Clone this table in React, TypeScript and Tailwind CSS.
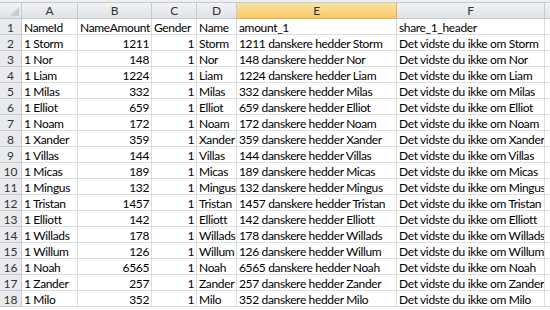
const names = [
  ["Storm", 1211],
  ["Nor", 148],
  ["Liam", 1224],
  ["Milas", 332],
  ["Elliot", 659],
  ["Noam", 172],
  ["Xander", 359],
  ["Villas", 144],
  ["Micas", 189],
  ["Mingus", 132],
  ["Tristan", 1457],
  ["Elliott", 142],
  ["Willads", 178],
  ["Willum", 126],
  ["Noah", 6565],
  ["Zander", 257],
  ["Milo", 352],
] as const;

const cols = [
  { key: "A", w: "w-[56px]" },
  { key: "B", w: "w-[74px]" },
  { key: "C", w: "w-[45px]" },
  { key: "D", w: "w-[40px]" },
  { key: "E", w: "w-[160px]" },
  { key: "F", w: "w-[148px]" },
];

const cell =
  "h-[16px] shrink-0 border-r border-b border-[#dadcdd] px-[2px] pt-[1px] leading-[15px] whitespace-nowrap overflow-hidden";

const Row = ({ n, values }: { n: number; values: (string | number)[] }) => {
  return (
    <div className="flex">
      <div className="h-[16px] w-[22px] shrink-0 border-r border-b border-[#c5cad1] bg-[#e8eaed] pt-[1px] text-center leading-[15px] text-[#333] tracking-normal">
        {n}
      </div>
      {cols.map((c, i) => {
        const v = values[i];
        const right = typeof v === "number";
        return (
          <div key={c.key} className={`${cell} ${c.w} ${right ? "text-right" : ""}`}>
            {v}
          </div>
        );
      })}
      <div className="h-[16px] flex-1 border-b border-[#dadcdd]" />
    </div>
  );
};

export default function App() {
  return (
    <div
      className="w-[550px] h-[310px] overflow-hidden bg-white text-[12px] tracking-[-0.35px] text-black"
      style={{ fontFamily: "Lato, 'Liberation Sans', sans-serif" }}
    >
      <div className="h-[3px] border-b border-[#c5cad1] bg-[#edeff2]" />
      <div className="flex h-[16px] bg-gradient-to-b from-[#f1f2f4] to-[#dfe2e6] text-[#333]">
        <div className="relative h-[16px] w-[22px] shrink-0 border-r border-b border-[#c5cad1]">
          <svg className="absolute right-[2px] bottom-[2px]" width="9" height="9" viewBox="0 0 9 9">
            <polygon points="9,0 9,9 0,9" fill="#c9ccd1" />
          </svg>
        </div>
        {cols.map((c) => (
          <div
            key={c.key}
            className={`h-[16px] shrink-0 border-r border-b text-center leading-[16px] ${c.w} ${
              c.key === "E"
                ? "bg-gradient-to-b from-[#fbe3a6] to-[#f6c861] border-[#e1b35a]"
                : "border-[#c5cad1]"
            }`}
          >
            {c.key}
          </div>
        ))}
        <div className="h-[16px] flex-1 border-b border-[#c5cad1]" />
      </div>
      <Row n={1} values={["NameId", "NameAmount", "Gender", "Name", "amount_1", "share_1_header"]} />
      {names.map(([name, amount], i) => (
        <Row
          key={name}
          n={i + 2}
          values={[
            "1 " + name,
            amount,
            1,
            name,
            `${amount} danskere hedder ${name}`,
            `Det vidste du ikke om ${name}`,
          ]}
        />
      ))}
    </div>
  );
}
